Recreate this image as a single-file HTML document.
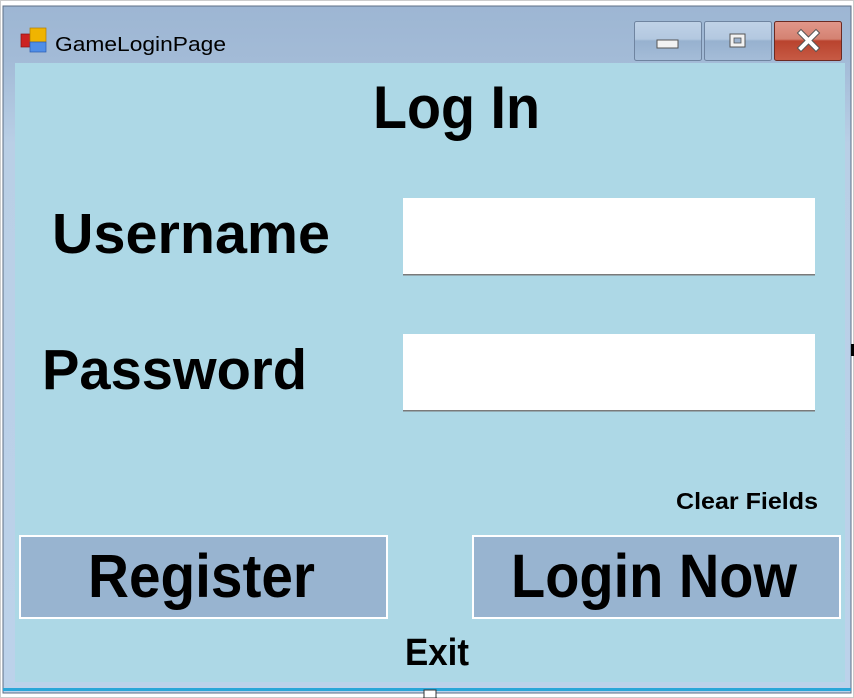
<!DOCTYPE html>
<html><head><meta charset="utf-8"><style>
html,body{margin:0;padding:0;width:854px;height:698px;overflow:hidden;background:#fff}
svg{display:block}
text{font-family:"Liberation Sans",Arial,sans-serif;fill:#000}
</style></head><body>
<svg width="854" height="698" viewBox="0 0 854 698" xmlns="http://www.w3.org/2000/svg">
<defs>
<linearGradient id="fr" x1="0" y1="0" x2="0" y2="1">
<stop offset="0" stop-color="#9db6d3"/><stop offset="0.08" stop-color="#a3bbd7"/><stop offset="0.2" stop-color="#b9cfe6"/><stop offset="1" stop-color="#bcd2ea"/>
</linearGradient>
<linearGradient id="btn" x1="0" y1="0" x2="0" y2="1">
<stop offset="0" stop-color="#c0d2e7"/><stop offset="0.45" stop-color="#b3c8e0"/><stop offset="0.5" stop-color="#97b1cf"/><stop offset="1" stop-color="#a5bdd8"/>
</linearGradient>
<linearGradient id="cls" x1="0" y1="0" x2="0" y2="1">
<stop offset="0" stop-color="#e1978a"/><stop offset="0.45" stop-color="#d48272"/><stop offset="0.5" stop-color="#b9432e"/><stop offset="1" stop-color="#c75b45"/>
</linearGradient>
</defs>
<rect x="0" y="0" width="854" height="698" fill="#fff"/>
<rect x="0.5" y="0.5" width="853" height="697" fill="none" stroke="#999" stroke-dasharray="1 1"/>
<rect x="3" y="6" width="848" height="687" fill="url(#fr)" stroke="#5d6f86" stroke-width="1"/>
<rect x="15" y="63" width="830" height="619" fill="#add8e6"/>
<rect x="3" y="688" width="848" height="3" fill="#2aa6d8"/>
<rect x="424" y="690" width="12" height="8" fill="#fff" stroke="#333"/>
<rect x="21" y="34" width="9" height="13" fill="#cc2222" stroke="#8a1010" stroke-width="0.7"/>
<rect x="30" y="28" width="16" height="14" fill="#f0b400" stroke="#b07d00" stroke-width="0.7"/>
<rect x="30" y="42" width="16" height="10" fill="#4f8ee8" stroke="#2a5cb0" stroke-width="0.7"/>
<text x="55" y="51" font-size="20" textLength="171" lengthAdjust="spacingAndGlyphs">GameLoginPage</text>
<rect x="634.5" y="21.5" width="67" height="39" rx="2" fill="url(#btn)" stroke="#6f84a0"/>
<rect x="657" y="40" width="21" height="8" fill="#f2f2f2" stroke="#555"/>
<rect x="704.5" y="21.5" width="67" height="39" rx="2" fill="url(#btn)" stroke="#6f84a0"/>
<rect x="730" y="34" width="15" height="13" fill="#f2f2f2" stroke="#555"/>
<rect x="734" y="38" width="7" height="5" fill="#9db3cf" stroke="#555" stroke-width="0.8"/>
<rect x="774.5" y="21.5" width="67" height="39" rx="2" fill="url(#cls)" stroke="#6b2a22"/>
<path d="M801 33 L816 48 M816 33 L801 48" stroke="#555" stroke-width="6" stroke-linecap="square"/>
<path d="M801 33 L816 48 M816 33 L801 48" stroke="#fff" stroke-width="4" stroke-linecap="square"/>
<text x="373" y="128" font-size="60" font-weight="bold" textLength="167" lengthAdjust="spacingAndGlyphs">Log In</text>
<text x="52" y="253" font-size="57" font-weight="bold" textLength="278" lengthAdjust="spacingAndGlyphs">Username</text>
<text x="42" y="389" font-size="57" font-weight="bold" textLength="265" lengthAdjust="spacingAndGlyphs">Password</text>
<rect x="403" y="198" width="412" height="77" fill="#fff"/>
<rect x="403" y="274" width="412" height="1.5" fill="#7a7a7a"/>
<rect x="403" y="334" width="412" height="77" fill="#fff"/>
<rect x="403" y="410" width="412" height="1.5" fill="#7a7a7a"/>
<text x="676" y="509" font-size="23" font-weight="bold" textLength="142" lengthAdjust="spacingAndGlyphs">Clear Fields</text>
<rect x="20" y="536" width="367" height="82" fill="#98b4d0" stroke="#fff" stroke-width="2"/>
<rect x="473" y="536" width="367" height="82" fill="#98b4d0" stroke="#fff" stroke-width="2"/>
<text x="88" y="597" font-size="61" font-weight="bold" textLength="227" lengthAdjust="spacingAndGlyphs">Register</text>
<text x="511" y="597" font-size="61" font-weight="bold" textLength="286" lengthAdjust="spacingAndGlyphs">Login Now</text>
<text x="405" y="665" font-size="38" font-weight="bold" textLength="64" lengthAdjust="spacingAndGlyphs">Exit</text>
<rect x="851" y="344" width="3" height="12" fill="#000"/>
</svg>
</body></html>
